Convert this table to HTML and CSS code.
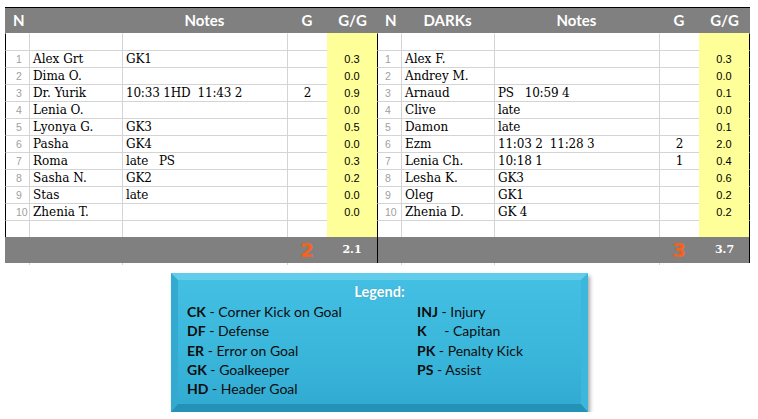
FILE: index.html
```html
<!DOCTYPE html>
<html>
<head>
<meta charset="utf-8">
<link rel="stylesheet" href="styles.css">
</head>
<body>
<div class="sheet">
  <div class="hdr">
    <div class="n">N</div><div></div><div class="c">Notes</div><div class="c">G</div><div class="c">G/G</div>
    <div class="n">N</div><div class="c">DARKs</div><div class="c">Notes</div><div class="c">G</div><div class="c">G/G</div>
  </div>
  <div class="row first">
    <div class="n"></div><div class="gl"></div><div class="gl"></div><div class="gl"></div><div class="y yl"></div>
    <div class="n rn"></div><div class="gl"></div><div class="gl"></div><div class="gl"></div><div class="y yr"></div>
  </div>
  <div class="row">
    <div class="n">1</div><div class="gl t">Alex Grt</div><div class="gl t">GK1</div><div class="gl g"></div><div class="y yl">0.3</div>
    <div class="n rn">1</div><div class="gl t">Alex F.</div><div class="gl t"></div><div class="gl g"></div><div class="y yr">0.3</div>
  </div>
  <div class="row">
    <div class="n">2</div><div class="gl t">Dima O.</div><div class="gl t"></div><div class="gl g"></div><div class="y yl">0.0</div>
    <div class="n rn">2</div><div class="gl t">Andrey M.</div><div class="gl t"></div><div class="gl g"></div><div class="y yr">0.0</div>
  </div>
  <div class="row">
    <div class="n">3</div><div class="gl t">Dr. Yurik</div><div class="gl t">10:33 1HD  11:43 2</div><div class="gl g">2</div><div class="y yl">0.9</div>
    <div class="n rn">3</div><div class="gl t">Arnaud</div><div class="gl t">PS   10:59 4</div><div class="gl g"></div><div class="y yr">0.1</div>
  </div>
  <div class="row">
    <div class="n">4</div><div class="gl t">Lenia O.</div><div class="gl t"></div><div class="gl g"></div><div class="y yl">0.0</div>
    <div class="n rn">4</div><div class="gl t">Clive</div><div class="gl t">late</div><div class="gl g"></div><div class="y yr">0.0</div>
  </div>
  <div class="row">
    <div class="n">5</div><div class="gl t">Lyonya G.</div><div class="gl t">GK3</div><div class="gl g"></div><div class="y yl">0.5</div>
    <div class="n rn">5</div><div class="gl t">Damon</div><div class="gl t">late</div><div class="gl g"></div><div class="y yr">0.1</div>
  </div>
  <div class="row">
    <div class="n">6</div><div class="gl t">Pasha</div><div class="gl t">GK4</div><div class="gl g"></div><div class="y yl">0.0</div>
    <div class="n rn">6</div><div class="gl t">Ezm</div><div class="gl t">11:03 2  11:28 3</div><div class="gl g">2</div><div class="y yr">2.0</div>
  </div>
  <div class="row">
    <div class="n">7</div><div class="gl t">Roma</div><div class="gl t">late   PS</div><div class="gl g"></div><div class="y yl">0.3</div>
    <div class="n rn">7</div><div class="gl t">Lenia Ch.</div><div class="gl t">10:18 1</div><div class="gl g">1</div><div class="y yr">0.4</div>
  </div>
  <div class="row">
    <div class="n">8</div><div class="gl t">Sasha N.</div><div class="gl t">GK2</div><div class="gl g"></div><div class="y yl">0.2</div>
    <div class="n rn">8</div><div class="gl t">Lesha K.</div><div class="gl t">GK3</div><div class="gl g"></div><div class="y yr">0.6</div>
  </div>
  <div class="row">
    <div class="n">9</div><div class="gl t">Stas</div><div class="gl t">late</div><div class="gl g"></div><div class="y yl">0.0</div>
    <div class="n rn">9</div><div class="gl t">Oleg</div><div class="gl t">GK1</div><div class="gl g"></div><div class="y yr">0.2</div>
  </div>
  <div class="row">
    <div class="n">10</div><div class="gl t">Zhenia T.</div><div class="gl t"></div><div class="gl g"></div><div class="y yl">0.0</div>
    <div class="n rn">10</div><div class="gl t">Zhenia D.</div><div class="gl t">GK 4</div><div class="gl g"></div><div class="y yr">0.2</div>
  </div>
  <div class="row">
    <div class="n"></div><div class="gl"></div><div class="gl"></div><div class="gl"></div><div class="y yl"></div>
    <div class="n rn"></div><div class="gl"></div><div class="gl"></div><div class="gl"></div><div class="y yr"></div>
  </div>
  <div class="ftr">
    <div></div><div></div><div></div><div class="big">2</div><div class="tot yl">2.1</div>
    <div></div><div></div><div></div><div class="big">3</div><div class="tot yr">3.7</div>
  </div>
  <div class="ticks">
    <div></div><div class="gl"></div><div class="gl"></div><div class="gl"></div><div></div>
    <div></div><div class="gl"></div><div class="gl"></div><div class="gl"></div><div></div>
  </div>
</div>

<div class="legend">
  <div class="lg-title">Legend:</div>
  <div class="lg-grid">
    <div class="lg-col">
      <div><b>CK</b> - Corner Kick on Goal</div>
      <div><b>DF</b> - Defense</div>
      <div><b>ER</b> - Error on Goal</div>
      <div><b>GK</b> - Goalkeeper</div>
      <div><b>HD</b> - Header Goal</div>
    </div>
    <div class="lg-col">
      <div><b>INJ</b> - Injury</div>
      <div><b>K</b> <span class="kgap"></span>- Capitan</div>
      <div><b>PK</b> - Penalty Kick</div>
      <div><b>PS</b> - Assist</div>
    </div>
  </div>
</div>
</body>
</html>
```

FILE: styles.css
```css
html, body {
  margin: 0;
  padding: 0;
  background: #ffffff;
}

.sheet {
  margin: 7px 0 0 5px;
  width: 745px;
  border-top: 1px solid #000;
}

.hdr, .row, .ftr, .ticks {
  display: grid;
  grid-template-columns: 24px 93px 165px 40px 51px 23px 93px 165px 40px 51px;
}

.hdr > div, .row > div, .ftr > div, .ticks > div {
  box-sizing: border-box;
  min-width: 0;
  overflow: hidden;
  white-space: pre;
}

/* header */
.hdr {
  height: 25px;
  background: #808080;
  color: #fff;
  font-family: Lato, "Open Sans", sans-serif;
  font-weight: 700;
  font-size: 15px;
  line-height: 25px;
}
.hdr .n { padding-left: 8px; }
.hdr .n:nth-child(6) { padding-left: 7px; }
.hdr .c { text-align: center; }

/* body rows */
.row {
  height: 17px;
}
.row > div {
  border-top: 1px solid #d4d4d4;
  height: 17px;
  line-height: 16px;
  font-family: "DejaVu Serif", serif;
  font-size: 12px;
  color: #000;
}
.row.first > div {
  border-top-color: transparent;
}
.row .gl { border-left: 1px solid #d4d4d4; }
.row .t { padding-left: 3px; }
.row .t:nth-child(3), .row .t:nth-child(8) { letter-spacing: -0.2px; }
.row .g { text-align: center; }

.row .n {
  border-left: 1px solid #000;
  padding-left: 10px;
  color: #a0a0a0;
  font-family: "Liberation Sans", Arial, sans-serif;
  font-size: 10.5px;
  overflow: visible;
}
.row .n.rn {
  border-left: none;
  padding-left: 7px;
}

.row .y {
  background: #ffff99;
  border-top-color: transparent;
  text-align: center;
  font-family: "Liberation Sans", Arial, sans-serif;
  font-size: 11px;
}
.yl, .yr { border-right: 1px solid #000; }

/* footer */
.ftr {
  height: 26px;
  background: #808080;
}
.ftr .big {
  text-align: center;
  font-family: "DejaVu Sans", sans-serif;
  font-weight: 700;
  font-size: 20px;
  line-height: 26px;
  color: #f4621e;
}
.ftr .tot {
  text-align: center;
  font-family: "DejaVu Serif", serif;
  font-weight: 700;
  font-size: 11px;
  line-height: 26px;
  color: #fff;
}
.ftr .yr { padding-left: 1px; }

.ticks {
  height: 2px;
}
.ticks .gl { border-left: 1px solid #d4d4d4; }

/* legend */
.legend {
  box-sizing: border-box;
  margin: 8px 0 0 171px;
  width: 417px;
  height: 139px;
  border-style: solid;
  border-width: 7px 7px 8px 7px;
  border-color: #62cdea #3cb6da #2492b6 #35aad0;
  background: linear-gradient(to bottom, #42bfe3 0%, #3bb7dc 55%, #32abd2 100%);
  box-shadow: 2px 3px 4px rgba(0, 0, 0, 0.35);
  font-family: Lato, "Open Sans", sans-serif;
  color: #0d0d0d;
  font-size: 14px;
}
.lg-title {
  padding-top: 2px;
  height: 20px;
  line-height: 20px;
  text-align: center;
  color: #fff;
  font-weight: 700;
  font-size: 14.5px;
  text-shadow: 0 0 1px rgba(0, 0, 0, 0.25);
}
.lg-grid {
  display: grid;
  grid-template-columns: 230px 1fr;
  padding-left: 9px;
}
.lg-col > div {
  height: 19.3px;
  line-height: 19.3px;
  white-space: nowrap;
}
.lg-col b { font-weight: 700; }
.kgap {
  display: inline-block;
  width: 14px;
}
```
